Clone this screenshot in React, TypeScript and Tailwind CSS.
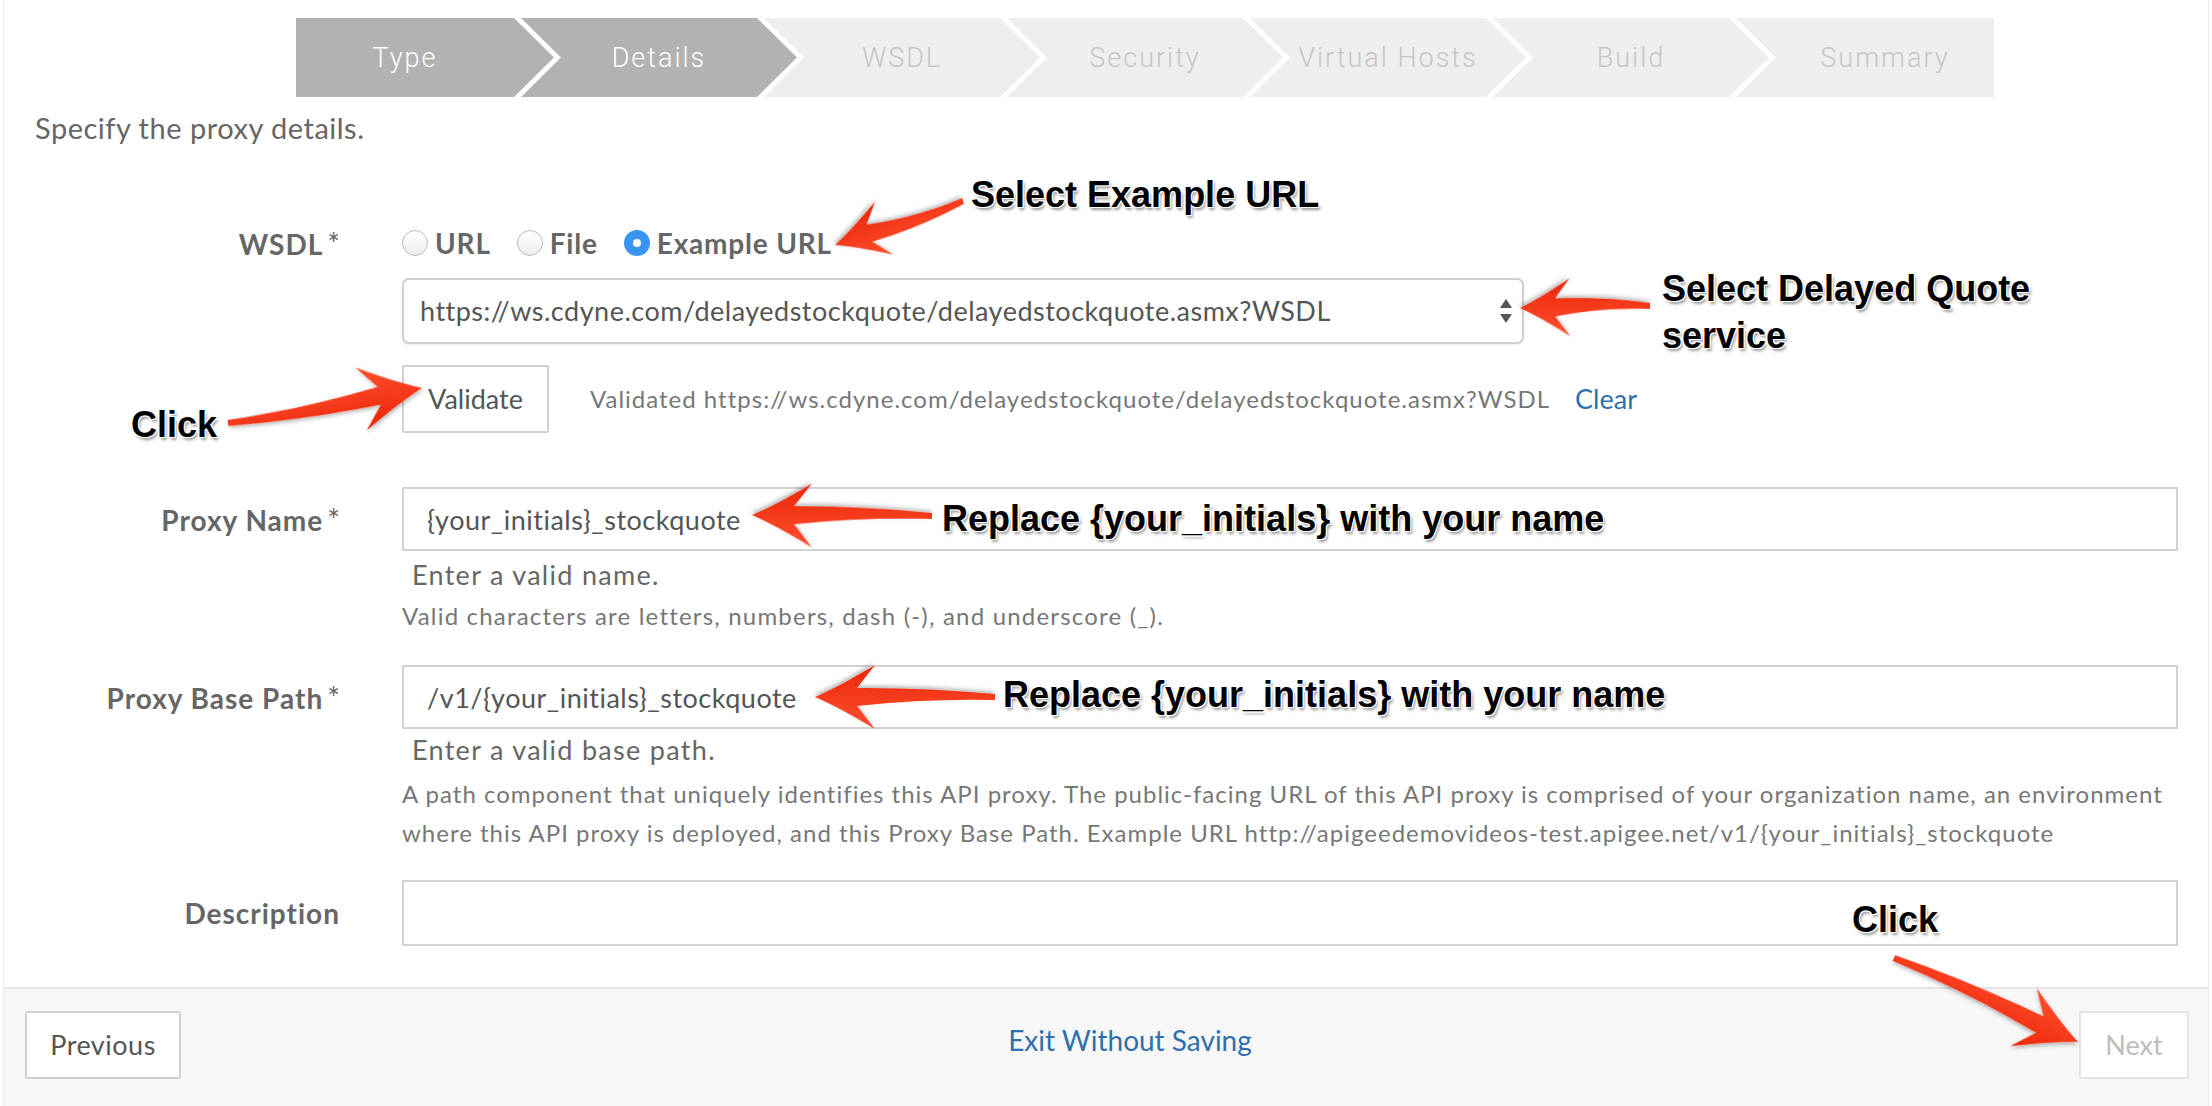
import React from "react"

type Step = { label: string; done: boolean }

const steps: Step[] = [
  { label: "Type", done: true },
  { label: "Details", done: true },
  { label: "WSDL", done: false },
  { label: "Security", done: false },
  { label: "Virtual Hosts", done: false },
  { label: "Build", done: false },
  { label: "Summary", done: false },
]

function Stepper() {
  return (
    <div className="pt-[18px] pl-[292px] flex">
      {steps.map((s, i) => {
        const shape =
          i === 0
            ? "w-[258px] pr-[40px] [clip-path:polygon(0_0,calc(100%_-_40px)_0,100%_50%,calc(100%_-_40px)_100%,0_100%)]"
            : i === steps.length - 1
              ? "w-[258px] -ml-[33px] pl-[40px] [clip-path:polygon(0_0,100%_0,100%_100%,0_100%,40px_50%)]"
              : "w-[276px] -ml-[33px] px-[40px] [clip-path:polygon(0_0,calc(100%_-_40px)_0,100%_50%,calc(100%_-_40px)_100%,0_100%,40px_50%)]"
        const tone = s.done ? "bg-[#b2b2b2] text-white" : "bg-[#eeeeee] text-[#c6c6c6]"
        return (
          <div
            key={s.label}
            className={`${shape} ${tone} shrink-0 h-[79px] pt-[2px] flex items-center justify-center font-['Roboto','Liberation_Sans',sans-serif] font-light text-[27px] tracking-[2px]`}
          >
            {s.label}
          </div>
        )
      })}
    </div>
  )
}

function Label({ children, star = false, h }: { children: React.ReactNode; star?: boolean; h: string }) {
  return (
    <div className={`w-[336px] shrink-0 flex items-center justify-end text-[28px] tracking-[1px] font-bold text-[#666] ${h}`}>
      <span>
        {children}
        {star && <span className="ml-[4px] text-[30px] font-normal tracking-normal">*</span>}
      </span>
    </div>
  )
}

function Radio({ checked, label }: { checked?: boolean; label: string }) {
  return (
    <div className="flex items-center gap-[7px]">
      {checked ? (
        <span className="w-[26px] h-[26px] rounded-full bg-[#3a94f4] flex items-center justify-center">
          <span className="w-[8px] h-[8px] rounded-full bg-white" />
        </span>
      ) : (
        <span className="w-[26px] h-[26px] rounded-full border border-[#bcbcbc] bg-gradient-to-b from-white to-[#ededed]" />
      )}
      <span className="text-[28px] tracking-[0.8px] font-bold text-[#666]">{label}</span>
    </div>
  )
}

function TextInput({ value }: { value?: string }) {
  return (
    <input
      readOnly
      defaultValue={value}
      className="w-full h-[64px] border-2 border-[#d2d2d2] bg-white pl-[23px] text-[27px] tracking-[0.5px] text-[#555] outline-none font-['Lato','Noto_Sans',sans-serif]"
    />
  )
}

function arrowD(L: number, hl: number, hw: number, sw: number, tw: number, bend: number) {
  const bx = L - hl
  const jx = L - hl * 0.7
  const cx = jx * 0.5
  return `M0 ${-tw / 2} Q${cx} ${bend - sw * 0.3} ${jx} ${-sw / 2} L${bx} ${-hw / 2} Q${L - hl * 0.4} ${-hw * 0.16} ${L} 0 Q${L - hl * 0.4} ${hw * 0.16} ${bx} ${hw / 2} L${jx} ${sw / 2} Q${cx} ${bend + sw * 0.3} 0 ${tw / 2} Z`
}

const arrows = [
  { t: [963, 201], p: [835, 245], hl: 52, hw: 56, bend: -6 },
  { t: [1650, 306], p: [1520, 308], hl: 50, hw: 58, bend: 5 },
  { t: [228, 423], p: [422, 388], hl: 62, hw: 64, bend: 5 },
  { t: [932, 516], p: [752, 515], hl: 60, hw: 64, bend: 4 },
  { t: [995, 697], p: [815, 697], hl: 60, hw: 64, bend: 4 },
  { t: [1894, 958], p: [2078, 1042], hl: 60, hw: 64, bend: -5 },
]

function Arrows() {
  return (
    <svg className="absolute inset-0 pointer-events-none" width={2212} height={1106}>
      <defs>
        <linearGradient id="red" x1="0" y1="0" x2="0" y2="1">
          <stop offset="0" stopColor="#ff5030" />
          <stop offset="1" stopColor="#eb2508" />
        </linearGradient>
        <filter id="sh" x="-20%" y="-20%" width="140%" height="140%">
          <feDropShadow dx="1" dy="2" stdDeviation="2" floodColor="#000" floodOpacity="0.3" />
        </filter>
      </defs>
      {arrows.map((a, i) => {
        const dx = a.p[0] - a.t[0]
        const dy = a.p[1] - a.t[1]
        const L = Math.hypot(dx, dy)
        const deg = (Math.atan2(dy, dx) * 180) / Math.PI
        return (
          <path
            key={i}
            d={arrowD(L, a.hl, a.hw, 18, 6, a.bend)}
            transform={`translate(${a.t[0]} ${a.t[1]}) rotate(${deg})`}
            fill="url(#red)"
            filter="url(#sh)"
          />
        )
      })}
    </svg>
  )
}

const note =
  "absolute font-['Liberation_Sans',Arial,sans-serif] font-bold text-[36px] leading-[47px] text-black whitespace-nowrap [text-shadow:-1px_-1px_0_#fff,1px_-1px_0_#fff,-1px_1px_0_#fff,1px_1px_0_#fff,2px_3px_3px_rgba(0,0,0,0.4)]"

function Annotations() {
  return (
    <>
      <Arrows />
      <div className={`${note} left-[971px] top-[171px]`}>Select Example URL</div>
      <div className={`${note} left-[1662px] top-[265px]`}>
        Select Delayed Quote
        <br />
        service
      </div>
      <div className={`${note} left-[131px] top-[401px]`}>Click</div>
      <div className={`${note} left-[942px] top-[495px]`}>Replace {"{your_initials}"} with your name</div>
      <div className={`${note} left-[1003px] top-[671px]`}>Replace {"{your_initials}"} with your name</div>
      <div className={`${note} left-[1852px] top-[896px]`}>Click</div>
    </>
  )
}

export default function App() {
  return (
    <div className="relative w-[2212px] h-[1106px] overflow-hidden bg-white font-['Lato','Noto_Sans',sans-serif]">
      <div className="mx-[3px] h-full flex flex-col border-x border-[#ececec] bg-white">
        <Stepper />
        <p className="mt-[15px] pl-[31px] text-[29px] tracking-[0.5px] leading-[32px] text-[#666]">
          Specify the proxy details.
        </p>

        {/* WSDL */}
        <div className="mt-[79px] flex pr-[30px]">
          <Label star h="h-[40px]">WSDL</Label>
          <div className="ml-[62px] flex-1">
            <div className="h-[40px] flex items-center gap-[26px]">
              <Radio label="URL" />
              <Radio label="File" />
              <Radio checked label="Example URL" />
            </div>
            <div className="mt-[15px] w-[1122px] h-[66px] rounded-[7px] border-2 border-[#cfcfcf] shadow-[0_1px_2px_rgba(0,0,0,0.08)] bg-white flex items-center justify-between pl-[16px] pr-[9px]">
              <span className="text-[27px] tracking-[0.5px] text-[#555]">
                https://ws.cdyne.com/delayedstockquote/delayedstockquote.asmx?WSDL
              </span>
              <svg width="14" height="28" viewBox="0 0 14 28">
                <path d="M7 2 L13 11 H1 Z" fill="#555" />
                <path d="M7 26 L13 17 H1 Z" fill="#555" />
              </svg>
            </div>
            <div className="mt-[21px] flex items-center">
              <button className="w-[147px] h-[68px] border-2 border-[#d0d0d0] rounded-[2px] bg-white text-[27px] text-[#555]">
                Validate
              </button>
              <span className="ml-[41px] text-[24px] tracking-[1px] text-[#777]">
                Validated https://ws.cdyne.com/delayedstockquote/delayedstockquote.asmx?WSDL
              </span>
              <span className="ml-[25px] text-[27px] text-[#2f6fae]">Clear</span>
            </div>
          </div>
        </div>

        {/* Proxy Name */}
        <div className="mt-[54px] flex pr-[30px]">
          <Label star h="h-[64px]">Proxy Name</Label>
          <div className="ml-[62px] flex-1">
            <TextInput value="{your_initials}_stockquote" />
            <p className="mt-[8px] pl-[10px] text-[27px] tracking-[1.3px] leading-[32px] text-[#666]">
              Enter a valid name.
            </p>
            <p className="mt-[10px] text-[24px] tracking-[1.2px] leading-[30px] text-[#777]">
              Valid characters are letters, numbers, dash (-), and underscore (_).
            </p>
          </div>
        </div>

        {/* Proxy Base Path */}
        <div className="mt-[34px] flex pr-[30px]">
          <Label star h="h-[64px]">Proxy Base Path</Label>
          <div className="ml-[62px] flex-1">
            <TextInput value="/v1/{your_initials}_stockquote" />
            <p className="mt-[5px] pl-[10px] text-[27px] tracking-[1.3px] leading-[32px] text-[#666]">
              Enter a valid base path.
            </p>
            <p className="mt-[8px] text-[24px] tracking-[1px] leading-[39px] text-[#777] whitespace-nowrap">
              A path component that uniquely identifies this API proxy. The public-facing URL of this API proxy is
              comprised of your organization name, an environment
              <br />
              where this API proxy is deployed, and this Proxy Base Path. Example URL
              http://apigeedemovideos-test.apigee.net/v1/{"{your_initials}"}_stockquote
            </p>
          </div>
        </div>

        {/* Description */}
        <div className="mt-[28px] flex pr-[30px]">
          <Label h="h-[66px]">Description</Label>
          <div className="ml-[62px] flex-1">
            <input readOnly className="w-full h-[66px] border-2 border-[#d2d2d2] bg-white outline-none" />
          </div>
        </div>

        <footer className="mt-auto h-[119px] border-t-2 border-[#e6e6e6] bg-[#f7f7f7] flex items-start pt-[22px] pl-[21px] pr-[19px]">
          <button className="w-[156px] h-[68px] border-2 border-[#d0d0d0] rounded-[3px] bg-white text-[27px] tracking-[0.5px] text-[#555]">
            Previous
          </button>
          <div className="flex-1 h-[58px] flex items-center justify-center text-[28px] text-[#2f6fae]">
            Exit Without Saving
          </div>
          <button className="w-[110px] h-[68px] border-2 border-[#e4e4e4] rounded-[3px] bg-white text-[27px] text-[#bdbdbd]">
            Next
          </button>
        </footer>
      </div>
      <Annotations />
    </div>
  )
}
